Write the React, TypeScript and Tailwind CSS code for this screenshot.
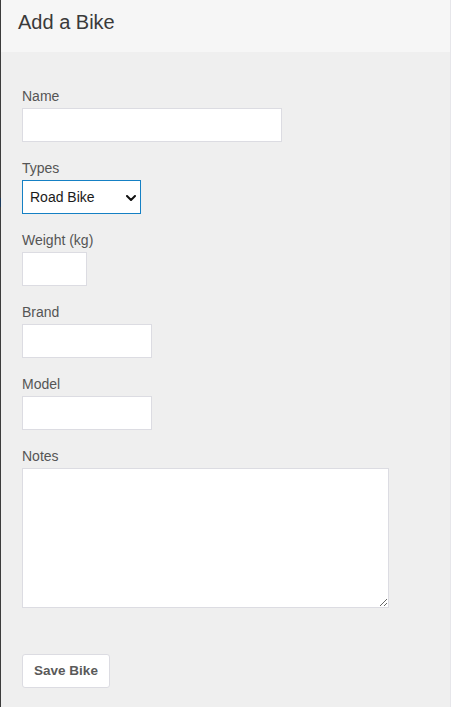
import React from "react";

const inputCls =
  "block h-[34px] bg-white border border-[#dcdce2] outline-none px-2 text-[14px] text-[#222]";

function Label({ children }: { children: React.ReactNode }) {
  return (
    <label className="block text-[14px] leading-5 text-[#555] mb-[2px]">{children}</label>
  );
}

export default function App() {
  return (
    <div
      className="flex min-h-[707px] w-[451px] bg-[#efefef]"
      style={{ fontFamily: '"Liberation Sans", Arial, sans-serif' }}
    >
      <div className="flex w-px flex-col bg-[#3c3c3c]">
        <div className="h-[198px]" />
        <div className="h-[9px] bg-[#1d3b5c]" />
      </div>
      <div className="flex flex-1 flex-col border-r border-[#e6e6ea]">
        <div className="h-[52px] bg-[#f6f6f6] pl-[17px] pt-[12px]">
          <h1 className="text-[20px] leading-5 text-[#3a3a3a]">Add a Bike</h1>
        </div>
        <form className="flex flex-col pl-[21px] pt-[34px]" onSubmit={(e) => e.preventDefault()}>
          <div className="mb-4">
            <Label>Name</Label>
            <input className={`${inputCls} w-[260px]`} />
          </div>
          <div className="mb-4">
            <Label>Types</Label>
            <div className="relative w-[119px]">
              <select className="block h-[34px] w-[119px] appearance-none bg-white border border-[#1580c4] outline-none pl-[7px] text-[14px] text-[#1a1a1a]">
                <option>Road Bike</option>
                <option>Mountain Bike</option>
                <option>Hybrid Bike</option>
              </select>
              <svg
                className="pointer-events-none absolute right-[5px] top-[15px]"
                width="10"
                height="6"
                viewBox="0 0 10 6"
              >
                <path d="M1 1 L5 5 L9 1" fill="none" stroke="#111" strokeWidth="2" strokeLinecap="round" strokeLinejoin="round" />
              </svg>
            </div>
          </div>
          <div className="mb-4">
            <Label>Weight (kg)</Label>
            <input className={`${inputCls} w-[65px]`} />
          </div>
          <div className="mb-4">
            <Label>Brand</Label>
            <input className={`${inputCls} w-[130px]`} />
          </div>
          <div className="mb-4">
            <Label>Model</Label>
            <input className={`${inputCls} w-[130px]`} />
          </div>
          <div>
            <Label>Notes</Label>
            <textarea className="block h-[140px] w-[367px] bg-white border border-[#dcdce2] outline-none p-2 text-[14px]" />
          </div>
          <div className="pt-[46px]">
            <button
              type="submit"
              className="h-[34px] w-[88px] rounded-[3px] border border-[#dcdce2] bg-white text-[13.5px] font-bold text-[#5a5a5a]"
            >
              Save Bike
            </button>
          </div>
        </form>
      </div>
    </div>
  );
}
